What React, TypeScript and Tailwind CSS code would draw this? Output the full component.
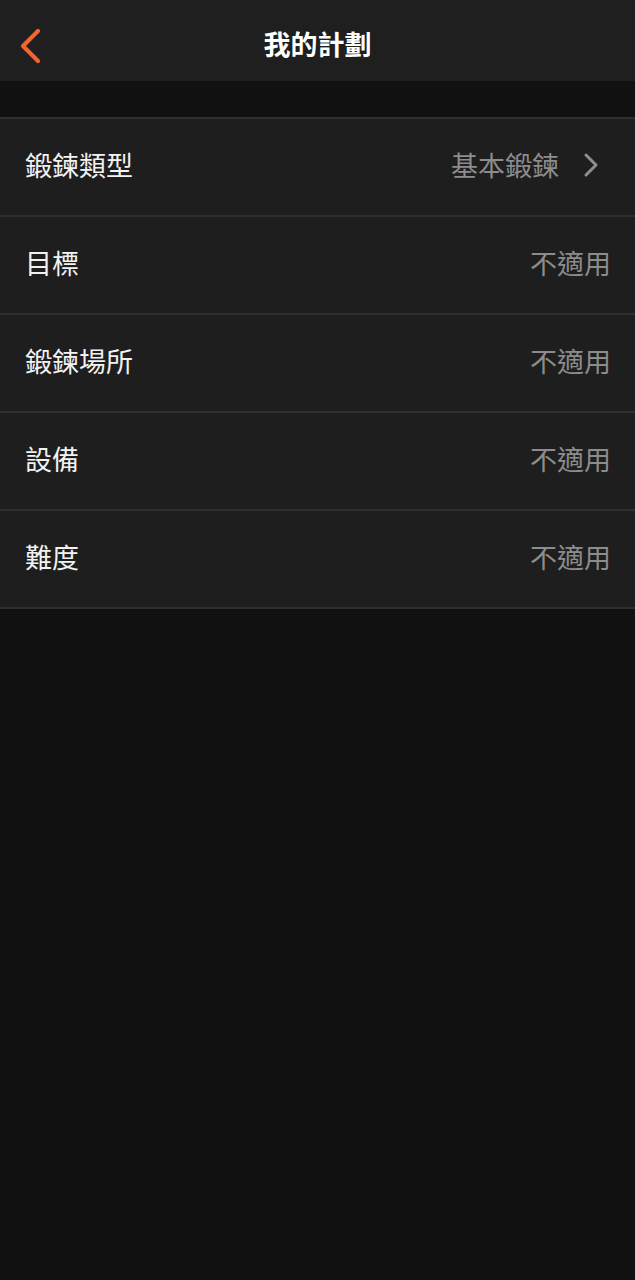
const rows = [
  { label: "鍛鍊類型", value: "基本鍛鍊", link: true },
  { label: "目標", value: "不適用", link: false },
  { label: "鍛鍊場所", value: "不適用", link: false },
  { label: "設備", value: "不適用", link: false },
  { label: "難度", value: "不適用", link: false },
];

const font = {
  fontFamily: '"Noto Sans CJK TC", "Noto Sans", sans-serif',
};

const App = () => {
  return (
    <div className="min-h-[1280px] bg-[#111111]" style={font}>
      <header className="relative flex h-[81px] items-center justify-center bg-[#1f1f1f]">
        <button className="absolute top-[28px] left-[18px]">
          <svg width="24" height="36" viewBox="0 0 24 36" fill="none">
            <path
              d="M20 3 L5 18 L20 33"
              stroke="#f26430"
              strokeWidth="4.2"
              strokeLinecap="round"
              strokeLinejoin="round"
            />
          </svg>
        </button>
        <h1 className="mt-[6px] text-[27px] leading-none font-bold text-white">
          我的計劃
        </h1>
      </header>
      <div className="h-[36px]" />
      <ul className="border-t-2 border-[#2f2f2f] bg-[#1e1e1e]">
        {rows.map((r) => (
          <li
            key={r.label}
            className="flex h-[98px] items-center justify-between border-b-2 border-[#2f2f2f] pr-[24px] pb-[5px] pl-[25px]"
          >
            <span className="text-[27px] leading-none text-[#f2f2f2]">
              {r.label}
            </span>
            <span className="flex items-center gap-[23px] text-[27px] leading-none text-[#8c8c8c]">
              {r.value}
              {r.link && (
                <svg
                  width="18"
                  height="26"
                  viewBox="0 0 18 26"
                  fill="none"
                  className="mr-[11px]"
                >
                  <path
                    d="M4 3 L14 13 L4 23"
                    stroke="#8e8e8e"
                    strokeWidth="3"
                    strokeLinecap="round"
                    strokeLinejoin="round"
                  />
                </svg>
              )}
            </span>
          </li>
        ))}
      </ul>
    </div>
  );
};

export default App;
